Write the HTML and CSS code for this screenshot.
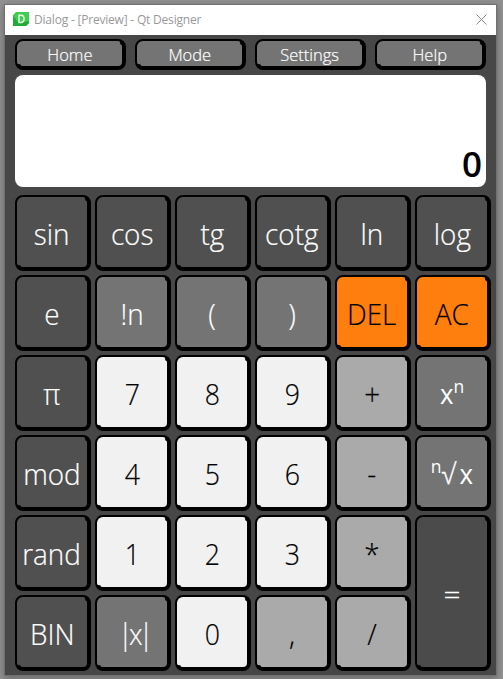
FILE: index.html
```html
<!DOCTYPE html>
<html lang="en">
<head>
<meta charset="utf-8">
<title>Dialog - [Preview] - Qt Designer</title>
<link rel="stylesheet" href="styles.css">
</head>
<body>
<div class="window">
  <header class="titlebar">
    <svg class="logo" width="16" height="14" viewBox="0 0 16 14"><path fill="#41cd52" d="M3 0H16V11L13 14H0V3Z"/><path fill="#1fab35" d="M0 4L6 11L16 9V11L13 14H0Z"/><path d="M6 3.2H8C10.2 3.2 11 4.8 11 6.8S10.200 10.500 8 10.500H6Z" fill="none" stroke="#e4f8e4" stroke-width="1.500"/></svg>
    <span class="title">Dialog - [Preview] - Qt Designer</span>
    <svg class="close" width="11" height="11" viewBox="0 0 11 11"><path d="M.5 .5L10.500 10.500M10.500 .5L.5 10.500" stroke="#888" fill="none"/></svg>
  </header>
  <nav class="menu">
    <button class="key"><span>Home</span></button>
    <button class="key"><span>Mode</span></button>
    <button class="key"><span>Settings</span></button>
    <button class="key"><span>Help</span></button>
  </nav>
  <div class="display"><span>0</span></div>
  <main class="keys">
    <button class="key fn"><span>sin</span></button>
    <button class="key fn"><span>cos</span></button>
    <button class="key fn"><span>tg</span></button>
    <button class="key fn"><span>cotg</span></button>
    <button class="key fn"><span>ln</span></button>
    <button class="key fn"><span>log</span></button>
    <button class="key fn"><span>e</span></button>
    <button class="key"><span>!n</span></button>
    <button class="key"><span>(</span></button>
    <button class="key"><span>)</span></button>
    <button class="key clear"><span>DEL</span></button>
    <button class="key clear"><span>AC</span></button>
    <button class="key fn"><span>π</span></button>
    <button class="key num"><span>7</span></button>
    <button class="key num"><span>8</span></button>
    <button class="key num"><span>9</span></button>
    <button class="key op"><span>+</span></button>
    <button class="key power"><span>x<sup>n</sup></span></button>
    <button class="key fn"><span>mod</span></button>
    <button class="key num"><span>4</span></button>
    <button class="key num"><span>5</span></button>
    <button class="key num"><span>6</span></button>
    <button class="key op"><span>-</span></button>
    <button class="key power"><span><sup>n</sup><span class="radical">√</span>x</span></button>
    <button class="key fn"><span>rand</span></button>
    <button class="key num"><span>1</span></button>
    <button class="key num"><span>2</span></button>
    <button class="key num"><span>3</span></button>
    <button class="key op"><span>*</span></button>
    <button class="key equals"><span>=</span></button>
    <button class="key fn"><span>BIN</span></button>
    <button class="key abs"><span>|x|</span></button>
    <button class="key num"><span>0</span></button>
    <button class="key op"><span>,</span></button>
    <button class="key op"><span>/</span></button>
  </main>
</div>
</body>
</html>
```
FILE: styles.css
```css
* { box-sizing: border-box; }
body {
  margin: 0;
  height: 679px;
  padding: 4px;
  background: #919191;
  font-family: "Open Sans", "Noto Sans", sans-serif;
  overflow: hidden;
}
.window {
  width: 493px;
  height: 672px;
  border: 1px solid #707070;
  background: #474747;
  box-shadow: 0 2px 7px rgba(0, 0, 0, .3);
}
.titlebar {
  height: 30px;
  display: flex;
  align-items: center;
  padding: 0 9px 2px 8px;
  background: #fff;
}
.title {
  margin-left: 5px;
  padding-top: 1px;
  flex: 1;
  font-size: 12px;
  letter-spacing: -.2px;
  color: #999;
  white-space: nowrap;
}
.menu {
  display: grid;
  grid-template-columns: repeat(4, 111px);
  gap: 9px;
  padding: 4px 10px 0;
}
.key {
  position: relative;
  display: flex;
  align-items: center;
  justify-content: center;
  min-width: 0;
  margin: 0;
  padding: 2px 0 0;
  border: solid #000;
  border-width: 2px 4px 4px 2px;
  border-radius: 8px;
  background: #747474;
  color: #fff;
  font-family: inherit;
  font-size: 29px;
  font-weight: 300;
  line-height: 1;
  white-space: nowrap;
  -webkit-text-stroke: .2px currentColor;
}
/* Rounded stubs where the thick edges meet the thin ones */
.key::before,
.key::after {
  content: "";
  position: absolute;
  width: 4px;
  height: 4px;
  border-radius: 2px;
  background: #000;
}
.key::before { top: 0; right: -2px; }
.key::after { bottom: -2px; left: 0; }
.key > span { transform: scaleX(.96); }
.menu .key { height: 31px; font-size: 16px; }
.menu .key > span { transform: scaleX(1.03); }
.display {
  width: 471px;
  height: 112px;
  margin: 5px 10px 8px;
  padding: 0 4px 3px;
  display: flex;
  align-items: flex-end;
  justify-content: flex-end;
  border-radius: 8px;
  background: #fff;
  color: #000;
  font-size: 35px;
  font-weight: 600;
  line-height: 40px;
}
.keys {
  display: grid;
  grid-template-columns: repeat(6, 76px);
  grid-auto-rows: 76px;
  gap: 4px;
  padding: 0 10px;
}
.fn { background: #505050; }
.clear { background: #ff7f0e; color: #000; }
.num { background: #f1f1f1; color: #000; }
.num > span { transform: scaleX(.92); }
.op { background: #aaa; color: #000; }
.equals { grid-row: span 2; padding-top: 5px; background: #4b4b4b; }
.equals > span { transform: scaleY(.85); -webkit-text-stroke: .6px currentColor; }
.abs > span { transform: scaleX(.94); letter-spacing: -4px; margin-right: -4px; }
.power { font-weight: 400; font-size: 28px; -webkit-text-stroke: 0; }
.power > span { transform: scaleX(.92); }
.radical { margin-right: 4px; font-weight: 300; -webkit-text-stroke: .4px currentColor; }
sup { font-size: 19px; line-height: 0; vertical-align: 11px; font-weight: 400; }
```
